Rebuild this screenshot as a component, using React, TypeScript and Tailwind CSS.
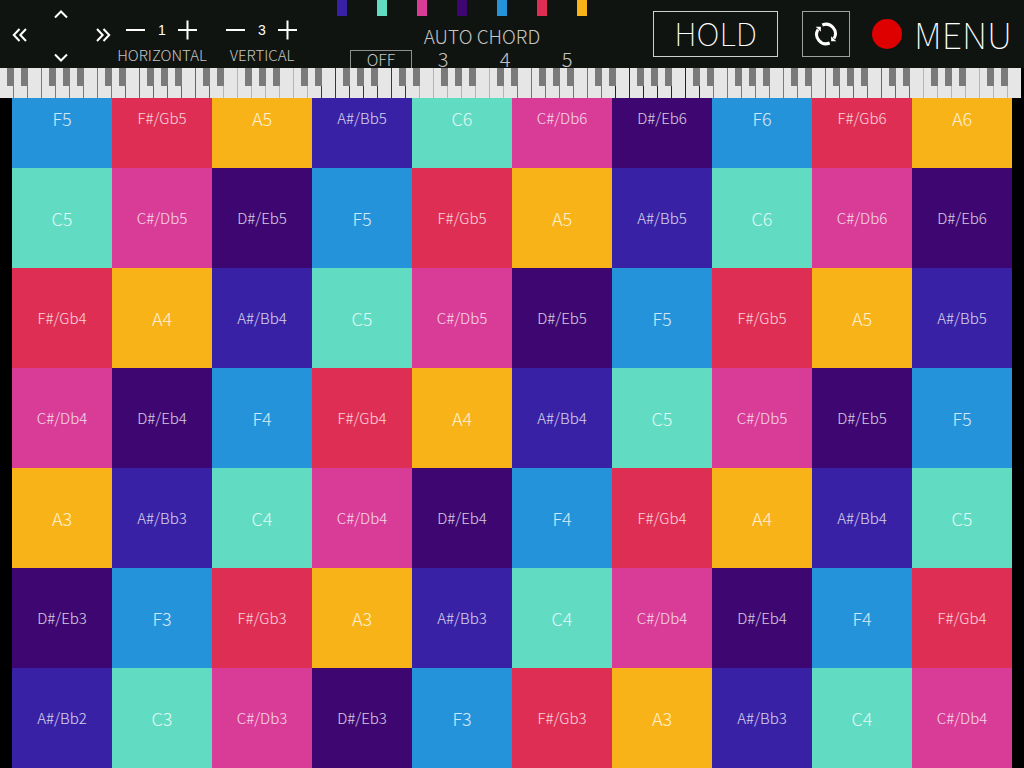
import { useState } from "react";
import clsx from "clsx";

const NOTES = [
  { name: "A#/Bb", color: "bg-[#3821a5]" },
  { name: "C", color: "bg-[#62dbc3]" },
  { name: "C#/Db", color: "bg-[#d83c96]" },
  { name: "D#/Eb", color: "bg-[#3d0670]" },
  { name: "F", color: "bg-[#2593d9]" },
  { name: "F#/Gb", color: "bg-[#df2e53]" },
  { name: "A", color: "bg-[#f8b319]" },
];

const ROWS = 7;
const COLS = 10;
const WHITE_KEYS = 73;
const CHORDS = ["OFF", "3", "4", "5"];

// white keys (within each group of seven) that carry a black key on their right
const BLACK_AFTER = [0, 1, 3, 4, 5];

const getPad = (index: number) => {
  const size = NOTES.length;
  const note = NOTES[((index % size) + size) % size];
  const octave = 2 + Math.floor((index + 6) / size);
  return { ...note, label: `${note.name}${octave}` };
};

type ArrowProps = { label: string; path: string; onClick: () => void };

function ArrowButton({ label, path, onClick }: ArrowProps) {
  return (
    <button type="button" aria-label={label} onClick={onClick}>
      <svg className="h-4 w-4 fill-none stroke-white stroke-2" viewBox="0 0 16 16">
        <path d={path} />
      </svg>
    </button>
  );
}

type StepperProps = { label: string; value: number; onChange: (value: number) => void };

function Stepper({ label, value, onChange }: StepperProps) {
  return (
    <div className="flex w-25 flex-col items-center pt-5">
      <div className="flex w-18 items-center justify-between">
        <button
          type="button"
          aria-label={`Decrease ${label}`}
          onClick={() => onChange(Math.max(1, value - 1))}
        >
          <svg className="h-5 w-5 stroke-white stroke-2" viewBox="0 0 20 20">
            <path d="M0 10H19" />
          </svg>
        </button>
        <span className="font-['Liberation_Sans',sans-serif] text-sm text-white">{value}</span>
        <button
          type="button"
          aria-label={`Increase ${label}`}
          onClick={() => onChange(value + 1)}
        >
          <svg className="h-5 w-5 fill-none stroke-white stroke-2" viewBox="0 0 20 20">
            <path d="M0 10H19M9.5 0.5V19.5" />
          </svg>
        </button>
      </div>
      <p className="mt-[3px] text-[15px] leading-6 text-[#c4c6c4]">{label}</p>
    </div>
  );
}

function Keyboard() {
  return (
    <div className="absolute inset-x-0 top-0 flex h-[30px] pr-0.5">
      {Array.from({ length: WHITE_KEYS }, (_, i) => (
        <div key={i} className="relative flex-1 pr-px">
          <div className="h-full bg-[#e6e6e6]" />
          {BLACK_AFTER.includes(i % 7) && i < WHITE_KEYS - 1 ? (
            <div className="absolute top-0 right-0 h-[18px] w-[7px] bg-[#7a7a7a]" />
          ) : null}
        </div>
      ))}
    </div>
  );
}

export default function App() {
  const [start, setStart] = useState(0);
  const [horizontal, setHorizontal] = useState(1);
  const [vertical, setVertical] = useState(3);
  const [chord, setChord] = useState("OFF");
  const [hold, setHold] = useState(false);

  return (
    <div className="min-h-screen overflow-hidden bg-black font-['Noto_Sans_CJK_JP',sans-serif] font-light">
      <header className="flex h-17 bg-[#101410]">
        <nav className="flex w-28 shrink-0 items-center justify-between pt-px pr-px pl-3">
          <ArrowButton
            label="Octave down"
            path="M7.5 2L1.8 8L7.5 14M14 2L8.3 8L14 14"
            onClick={() => setStart(start - 7)}
          />
          <div className="flex h-full flex-col justify-between pt-1.5 pb-0.5">
            <ArrowButton label="Note up" path="M1 10.5L7 4.5L13 10.5" onClick={() => setStart(start + 1)} />
            <ArrowButton label="Note down" path="M1 4.5L7 10.5L13 4.5" onClick={() => setStart(start - 1)} />
          </div>
          <ArrowButton
            label="Octave up"
            path="M2 2L7.7 8L2 14M8.5 2L14.2 8L8.5 14"
            onClick={() => setStart(start + 7)}
          />
        </nav>

        <Stepper label="HORIZONTAL" value={horizontal} onChange={setHorizontal} />
        <Stepper label="VERTICAL" value={vertical} onChange={setVertical} />

        <section className="ml-6 w-66 shrink-0">
          <div className="flex h-4 gap-[30px] pl-px">
            {NOTES.map((note) => (
              <div key={note.name} className={clsx("w-2.5", note.color)} />
            ))}
          </div>
          <h2 className="mt-2 pl-7 text-center text-[19px] leading-6 text-[#c4c6c4]">AUTO CHORD</h2>
          <div className="mt-0.5 flex pl-3.5">
            {CHORDS.map((item) => (
              <button
                key={item}
                type="button"
                onClick={() => setChord(item)}
                className={clsx(
                  "h-5 w-[62px] border pb-0.5 leading-4 text-[#c4c6c4]",
                  item === "OFF" ? "text-base" : "text-xl",
                  chord === item ? "border-[#8e908e]" : "border-transparent"
                )}
              >
                {item}
              </button>
            ))}
          </div>
        </section>

        <div className="ml-auto flex shrink-0 items-center pr-3 pb-px">
          <button
            type="button"
            aria-pressed={hold}
            onClick={() => setHold(!hold)}
            className="flex h-[46px] w-[125px] items-center justify-center border border-[#d0d0d0] pb-1 text-[32px] leading-10 font-thin text-white"
          >
            HOLD
          </button>
          <button
            type="button"
            aria-label="Reset"
            onClick={() => setStart(0)}
            className="ml-6 flex h-[46px] w-12 items-center justify-center border border-[#a0a2a0]"
          >
            <svg className="h-6 w-6" viewBox="0 0 24 24">
              <g className="fill-none stroke-white stroke-3">
                <path d="M8.3 3A9.4 9.4 0 0 1 20 16.5" />
                <path d="M15.7 21A9.4 9.4 0 0 1 4 7.5" />
              </g>
              <path className="fill-white" d="M1.7 4.7H6.9V9.8Z" />
              <path className="fill-white" d="M22.3 19.3H17.1V14.2Z" />
            </svg>
          </button>
          <button type="button" aria-label="Record" className="ml-[22px] h-[30px] w-[30px] rounded-full bg-[#de0000]" />
          <button type="button" className="ml-3 pb-0.5 text-4xl leading-10 font-thin text-white">
            MENU
          </button>
        </div>
      </header>

      <main className="relative">
        <div className="grid grid-cols-10 px-3">
          {Array.from({ length: ROWS * COLS }, (_, i) => {
            const row = ROWS - 1 - Math.floor(i / COLS);
            const pad = getPad(start + row * vertical + (i % COLS) * horizontal);
            return (
              <button
                key={i}
                type="button"
                className={clsx(
                  "aspect-square text-white/80",
                  pad.color,
                  pad.name.length > 1 ? "text-[15px]" : "text-lg"
                )}
              >
                {pad.label}
              </button>
            );
          })}
        </div>
        <Keyboard />
      </main>
    </div>
  );
}
